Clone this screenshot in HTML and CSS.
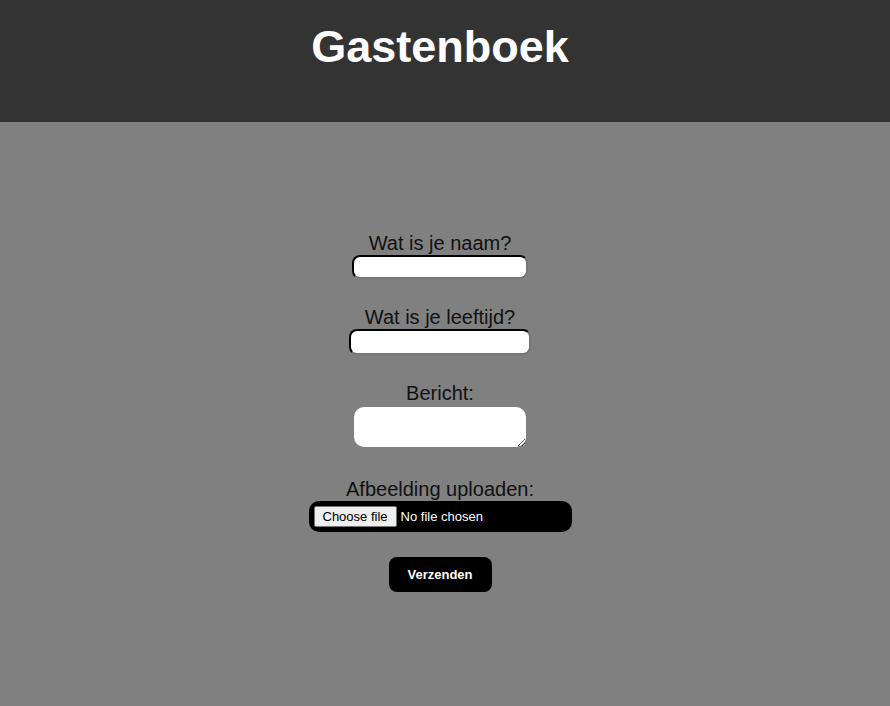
FILE: index.html
```html
<!DOCTYPE html>
<html lang="nl">
<head>
    <meta charset="UTF-8">
    <meta name="viewport" content="width=device-width, initial-scale=1.0">
    <title>Gastenboek</title>
    <link rel="stylesheet" href="styles.css">
</head>
<body>
    <header class="header">
        <h1>Gastenboek</h1>
    </header>

    <main class="content">
        <form class="guest-form" action="#" method="post">
            <label for="naam">Wat is je naam?</label>
            <input type="text" id="naam" name="naam" class="field field-name">

            <label for="leeftijd">Wat is je leeftijd?</label>
            <input type="number" id="leeftijd" name="leeftijd" class="field field-age">

            <label for="bericht">Bericht:</label>
            <textarea id="bericht" name="bericht" class="field-message"></textarea>

            <label for="afbeelding">Afbeelding uploaden:</label>
            <!-- custom file picker, the real input stays hidden -->
            <div class="file-box">
                <input type="file" id="afbeelding" name="afbeelding" class="file-input">
                <label for="afbeelding" class="file-btn">Choose file</label>
                <span class="file-name" id="fileName">No file chosen</span>
            </div>

            <button type="submit" class="submit-btn">Verzenden</button>
        </form>
    </main>

    <script>
        const fileInput = document.getElementById("afbeelding");
        const fileName = document.getElementById("fileName");

        // Show the chosen file name next to the button
        fileInput.addEventListener("change", () => {
            fileName.textContent = fileInput.files.length ? fileInput.files[0].name : "No file chosen";
        });
    </script>
</body>
</html>
```

FILE: styles.css
```css
body {
    margin: 0;
    font-family: "Liberation Sans", Arial, sans-serif;
    background-color: #808080;
    min-height: 100vh;
}

.header {
    background-color: #333;
    height: 122px;
    text-align: center;
    padding-right: 10px;
}

.header h1 {
    margin: 0;
    padding-top: 21px;
    font-size: 45px;
    color: #fff;
}

.content {
    padding-top: 110px;
    padding-right: 10px;
}

.guest-form {
    display: flex;
    flex-direction: column;
    align-items: center;
}

.guest-form > label {
    font-size: 20px;
    color: #111;
    line-height: 23px;
}

.field {
    box-sizing: border-box;
    border: 2px inset #222;
    border-radius: 8px;
    background: #fff;
    padding: 2px 4px;
    margin-bottom: 27px;
}

.field-name {
    width: 176px;
    height: 24px;
}

.field-age {
    width: 182px;
    height: 26px;
}

.field-message {
    box-sizing: border-box;
    width: 172px;
    height: 40px;
    border: none;
    border-radius: 10px;
    background: #fff;
    margin-bottom: 31px;
    margin-top: 2px;
}

.file-box {
    box-sizing: border-box;
    width: 263px;
    height: 31px;
    padding: 0 5px;
    background: #000;
    color: #fff;
    border-radius: 10px;
    font-size: 13px;
    margin-bottom: 25px;
    display: flex;
    align-items: center;
    gap: 4px;
}

.file-input {
    display: none;
}

.file-btn {
    box-sizing: border-box;
    height: 21px;
    padding: 0 8px;
    line-height: 19px;
    background: #efefef;
    color: #000;
    border: 1px solid #767676;
    border-radius: 2px;
    cursor: pointer;
}

.submit-btn {
    width: 103px;
    height: 35px;
    background: #000;
    color: #fff;
    font-weight: bold;
    font-size: 13px;
    border: none;
    border-radius: 8px;
    cursor: pointer;
}
```
